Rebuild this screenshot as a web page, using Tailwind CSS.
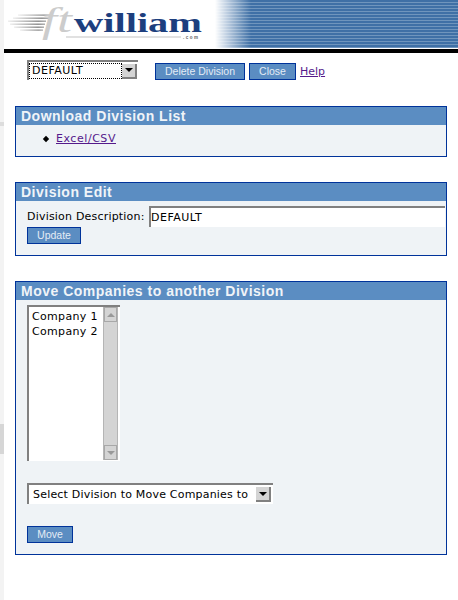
<!DOCTYPE html>
<html>
<head>
<meta charset="utf-8">
<script src="https://cdn.jsdelivr.net/npm/@tailwindcss/browser@4"></script>
</head>
<body class="bg-white overflow-hidden">
<div class="flex h-[600px] w-[458px] font-['DejaVu_Sans',sans-serif] text-[11px] text-black">
  <!-- left gutter -->
  <div class="w-[4px] shrink-0 bg-[#f3f3f3] flex flex-col">
    <div class="h-[122px]"></div>
    <div class="h-[4px] bg-[#dddddd]"></div>
    <div class="h-[298px]"></div>
    <div class="h-[30px] bg-[#d6d6d6]"></div>
  </div>
  <div class="flex-1 min-w-0 flex flex-col">
    <!-- header -->
    <header class="h-[49px] flex">
      <svg class="shrink-0" width="211" height="49" viewBox="0 0 211 49">
        <defs>
          <linearGradient id="sl" x1="0" x2="1" y1="0" y2="0">
            <stop offset="0" stop-color="#eeeeee"/>
            <stop offset="0.8" stop-color="#888888"/>
            <stop offset="1" stop-color="#aaaaaa"/>
          </linearGradient>
        </defs>
        <g fill="url(#sl)">
          <rect x="14" y="14.5" width="32" height="1.2"/>
          <rect x="9" y="17.5" width="36" height="1.4"/>
          <rect x="4" y="20.5" width="38" height="1.4"/>
          <rect x="6" y="23.5" width="35" height="1.4"/>
          <rect x="10" y="26.5" width="30" height="1.4"/>
          <rect x="16" y="29.5" width="23" height="1.2"/>
        </g>
        <text x="38" y="32" font-family="Liberation Serif" font-style="italic" font-size="36" fill="#cccccc" textLength="30" lengthAdjust="spacingAndGlyphs">ft</text>
        <text x="70" y="32" font-family="Liberation Serif" font-weight="700" font-size="27" fill="#1d3f7e" textLength="128" lengthAdjust="spacingAndGlyphs">william</text>
        <rect x="62" y="36.5" width="115" height="1" fill="#c4c4c4"/>
        <text x="179" y="39" font-family="Liberation Sans" font-weight="700" font-size="4.5" letter-spacing="1.5" fill="#666666">.com</text>
      </svg>
      <div class="flex-1 relative mb-[1px] bg-[repeating-linear-gradient(180deg,#3f70a6_0,#3f70a6_2px,#6f95bd_2px,#6f95bd_3px)]">
        <div class="absolute inset-y-0 left-0 w-[36px] bg-gradient-to-r from-white to-transparent"></div>
      </div>
    </header>
    <div class="h-[4px] bg-black"></div>

    <!-- toolbar -->
    <div class="h-[53px] pl-[23px] flex items-start pt-[7px]">
      <div class="w-[111px] h-[20px] flex items-center border-t-2 border-l-2 border-[#808080] pr-[1px]">
        <div class="flex-1 h-[16px] border border-dotted border-black flex items-center pl-[2px] pt-[1px] tracking-[0.5px]">DEFAULT</div>
        <div class="w-[15px] h-[15px] bg-[#d4d4d4] border-r-2 border-b-2 border-[#808080] flex items-center justify-center"><div class="w-0 h-0 border-x-[4px] border-x-transparent border-t-[4px] border-t-black"></div></div>
      </div>
      <button class="ml-[17px] mt-[3px] w-[90px] h-[17px] bg-[#5b8dc2] border border-[#00339a] font-['Liberation_Sans',sans-serif] text-[10.5px] text-[#e4ecf5]">Delete Division</button>
      <button class="ml-[4px] mt-[3px] w-[47px] h-[17px] bg-[#5b8dc2] border border-[#00339a] font-['Liberation_Sans',sans-serif] text-[10.5px] text-[#e4ecf5]">Close</button>
      <a class="ml-[4px] mt-[4px] text-[#551a8b] underline">Help</a>
    </div>

    <!-- panels -->
    <section class="ml-[11px] w-[432px] h-[51px] border border-[#00339a] bg-[#eff3f6]">
      <h2 class="h-[18px] bg-[#5b8dc2] pl-[5px] font-['Liberation_Sans',sans-serif] text-[14px] tracking-[0.5px] leading-[18px] font-bold text-[#f0f4f8]">Download Division List</h2>
      <div class="flex items-center pl-[27px] pt-[6px]">
        <span class="w-[6px] h-[6px] bg-black rotate-45 scale-75"></span>
        <a class="ml-[7px] text-[#551a8b] underline tracking-[0.55px]">Excel/CSV</a>
      </div>
    </section>

    <section class="mt-[25px] ml-[11px] w-[432px] h-[74px] border border-[#00339a] bg-[#eff3f6]">
      <h2 class="h-[18px] bg-[#5b8dc2] pl-[5px] font-['Liberation_Sans',sans-serif] text-[14px] tracking-[0.5px] leading-[18px] font-bold text-[#f0f4f8]">Division Edit</h2>
      <div class="flex items-center pl-[11px] pt-[5px]">
        <label class="w-[122px] pt-[1px] tracking-[0.2px]">Division Description:</label>
        <div class="flex-1 h-[21px] mr-[1px] bg-white border-t-2 border-l-2 border-[#808080] flex items-center pt-[1px] tracking-[0.5px]">DEFAULT</div>
      </div>
      <button class="block ml-[11px] w-[54px] h-[17px] bg-[#5b8dc2] border border-[#00339a] font-['Liberation_Sans',sans-serif] text-[10.5px] text-[#e4ecf5]">Update</button>
    </section>

    <section class="mt-[25px] ml-[11px] w-[432px] h-[274px] border border-[#00339a] bg-[#eff3f6]">
      <h2 class="h-[18px] bg-[#5b8dc2] pl-[5px] font-['Liberation_Sans',sans-serif] text-[14px] tracking-[0.5px] leading-[18px] font-bold text-[#f0f4f8]">Move Companies to another Division</h2>
      <div class="ml-[11px] mt-[5px] w-[93px] h-[156px] bg-white border-t-2 border-l-2 border-[#808080] pr-[2px] pb-[1px] flex">
        <div class="flex-1 pl-[3px] pt-[2px] leading-[15px] tracking-[0.33px]">
          <div>Company 1</div>
          <div>Company 2</div>
        </div>
        <div class="w-[15px] bg-[#d4d4d4] border-x border-[#b5b5b5] flex flex-col justify-between">
          <div class="h-[15px] bg-[#d4d4d4] border border-[#a8a8a8] flex items-center justify-center"><div class="w-0 h-0 border-x-[4px] border-x-transparent border-b-[4px] border-b-[#999999]"></div></div>
          <div class="h-[15px] bg-[#d4d4d4] border border-[#a8a8a8] flex items-center justify-center"><div class="w-0 h-0 border-x-[4px] border-x-transparent border-t-[4px] border-t-[#999999]"></div></div>
        </div>
      </div>
      <div class="ml-[11px] mt-[22px] w-[246px] h-[21px] bg-white border-t-2 border-l-2 border-[#808080] flex items-center pl-[4px] pr-[2px]">
        <span class="flex-1 pt-[1px] tracking-[0.2px]">Select Division to Move Companies to</span>
        <div class="w-[15px] h-[15px] bg-[#d4d4d4] border-r-2 border-b-2 border-[#808080] flex items-center justify-center"><div class="w-0 h-0 border-x-[4px] border-x-transparent border-t-[4px] border-t-black"></div></div>
      </div>
      <button class="block ml-[11px] mt-[22px] w-[46px] h-[17px] bg-[#5b8dc2] border border-[#00339a] font-['Liberation_Sans',sans-serif] text-[10.5px] text-[#e4ecf5]">Move</button>
    </section>
  </div>
</div>
</body>
</html>
